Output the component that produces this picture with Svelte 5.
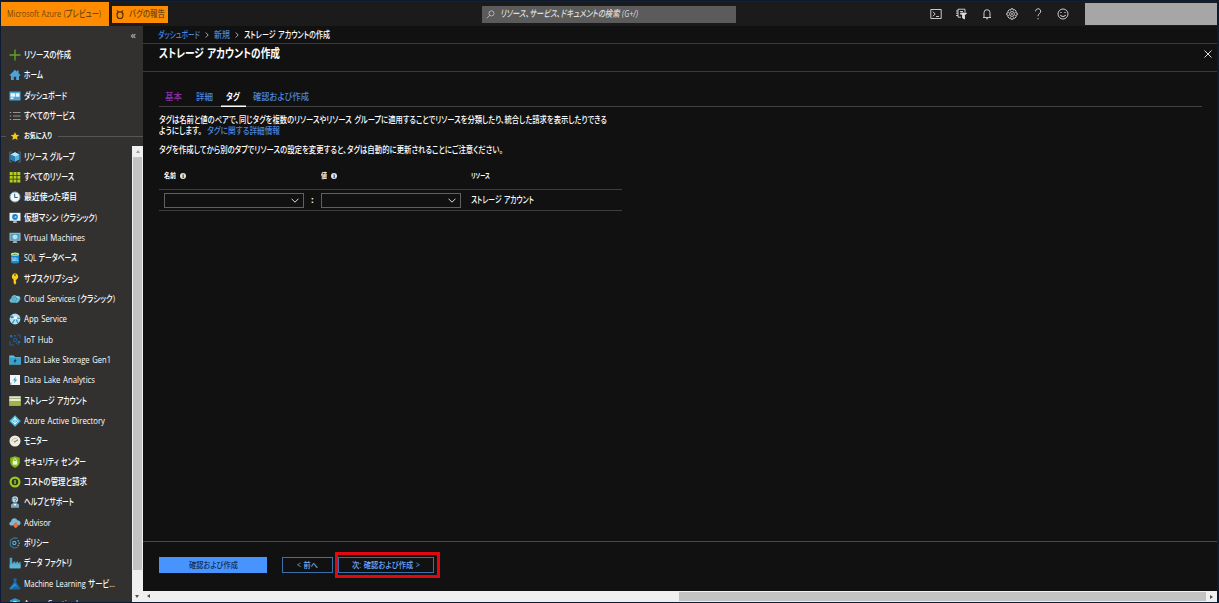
<script lang="ts">
	const MENU = [
		{
			label: 'リソースの作成',
			width: 47,
			icon: '<path d="M6 .5v11M.5 6h11" stroke="#5ea226" stroke-width="1.4"/>'
		},
		{
			label: 'ホーム',
			width: 19,
			icon: '<path d="M6 .8L.4 6.3l.8.8.8-.7V11h2.8V7.7h2.4V11H10V6.4l.8.7.8-.8-2-2V1.5H8v1.3z" fill="#4da3d6"/>'
		},
		{
			label: 'ダッシュボード',
			width: 43,
			icon: '<path d="M.5 1.5h11v9H.5z" fill="#4aa5da"/><path d="M1.5 3.3h4.6v3.4H1.5zM6.8 3.3h3.7v3.4H6.8zM1.5 7.4h3V9h-3z" fill="#e8f5fb"/>'
		},
		{
			label: 'すべてのサービス',
			width: 51,
			icon: '<path d="M4 2.5h7.5M4 6h7.5M4 9.5h7.5" stroke="#969594"/><path d="M.8 2.5h1.4M.8 6h1.4M.8 9.5h1.4" stroke="#a7a6a5"/>'
		},
		{
			label: 'お気に入り',
			width: 28,
			heading: true,
			icon: '<path d="M6 2l1.2 2.7 3 .3L8 7l.6 3L6 8.5 3.4 10 4 7 1.8 5l3-.3z" fill="#f4ca18"/>'
		},
		{
			label: 'リソース グループ',
			width: 51,
			icon: '<path d="M2.8 1H.8v10h2M9.2 1h2v10h-2" fill="none" stroke="#4f6f82"/><path d="M6 1.2l4.4 2.2v5L6 10.8 1.6 8.4v-5z" fill="#58b5df"/><path d="M1.6 3.4L6 5.6l4.400-2.200L6 1.200z" fill="#b8e6f7"/><path d="M6 5.6v5.2L1.6 8.4v-5z" fill="#287fb8"/>'
		},
		{
			label: 'すべてのリソース',
			width: 50,
			icon: '<path d="M.7 1h3v3h-3zM4.5 1h3v3h-3zM8.3 1h3v3h-3zM.7 4.7h3v3h-3zM4.5 4.7h3v3h-3zM8.3 4.7h3v3h-3zM.7 8.4h3v3h-3zM4.5 8.4h3v3h-3zM8.3 8.4h3v3h-3z" fill="#b4cf19"/>'
		},
		{
			label: '最近使った項目',
			width: 53,
			icon: '<circle cx="6" cy="6" r="5" fill="#f5f8fa" stroke="#83acc6"/><path d="M5.7 2.7v3.8h3" fill="none" stroke="#3b5365"/>'
		},
		{
			label: '仮想マシン (クラシック)',
			width: 73,
			icon: '<path d="M.5.8h11v8H.5z" fill="#eaf5fc"/><path d="M4.5 9h3l.6 2H3.9z" fill="#9fb6c4"/><circle cx="6" cy="4.9" r="2.8" fill="#1482cd"/><path d="M4.3 5.4h3.5L7 4z" fill="#d6effb"/>'
		},
		{
			label: 'Virtual Machines',
			width: 61,
			icon: '<path d="M.5.8h11v8H.5z" fill="#9dbccb"/><path d="M1.5 1.8h9v6h-9z" fill="#4b9dc5"/><path d="M6 2.4L8.4 3.6v2.7L6 7.5 3.6 6.3V3.6z" fill="#b7e1ef"/><path d="M4.5 9h3l1 2h-5z" fill="#8bb0be"/>'
		},
		{
			label: 'SQL データベース',
			width: 53,
			icon: '<path d="M2 2.5h8v7.7c0 1.8-8 1.8-8 0z" fill="#1689d0"/><ellipse cx="6" cy="2.3" rx="4" ry="1.7" fill="#d7eff3"/><ellipse cx="6" cy="2.4" rx="2.9" ry="1" fill="#78b743"/><path d="M4.5 5.8H3v1.4h1.4v1.4H2.8M5.2 5.8h1.6v2.8H5.2zM8 5.6v3h1.4" fill="none" stroke="#d7f1ff" stroke-width=".6"/>'
		},
		{
			label: 'サブスクリプション',
			width: 55,
			icon: '<path d="M6 .3a3.4 3.4 0 0 0-1.4 6.4V10L6 11.7 7.4 10l-.8-.8.8-.8-.8-.8.8-.9A3.4 3.4 0 0 0 6 .3z" fill="#f8cf13"/><circle cx="6" cy="2" r=".9" fill="#635b26"/>'
		},
		{
			label: 'Cloud Services (クラシック)',
			width: 91,
			icon: '<path d="M3 9.8C-.2 9.8-.1 5.8 2.2 5.6 2.2 2 6 .8 7.7 3c3.4-.8 4.7 2.2 3 4.3-.7 2-3 3-4.2 2.5z" fill="#66b9d4"/><circle cx="5.6" cy="6" r="2" fill="none" stroke="#3d8cae" stroke-width=".8" stroke-dasharray="1 .5"/><path d="M7.5 3.5l2.4 1.4" stroke="#c3e6ee"/>'
		},
		{
			label: 'App Service',
			width: 43,
			icon: '<circle cx="6" cy="6" r="5.4" fill="#b6deed"/><path d="M1.5 3.2l5 1.8 4.7.3M6.5 5L3.2 10.6M6.5 5l2.4 5" stroke="#3095bf" stroke-width="1.2"/><circle cx="6.4" cy="5" r="1.8" fill="#edfaff"/><circle cx="2.6" cy="4" r="1.3" fill="#288abb"/>'
		},
		{
			label: 'IoT Hub',
			width: 29,
			icon: '<g fill="none" stroke="#215b8b" stroke-width="1.2"><path d="M1 7v4h4M1 3h3M8 1h3v3M7 9l3 1.5"/><circle cx="6.2" cy="6" r="1.7"/></g><path d="M9 7h2v2H9zM1 1h2v2H1zM5 1h1.5v1.5H5z" fill="#2a6da6"/>'
		},
		{
			label: 'Data Lake Storage Gen1',
			width: 87,
			icon: '<path d="M.3 1.5h4.5L6 3h5.7v7.5H.3z" fill="#67c3e6"/><path d="M.3 3.5h11.4v7H.3z" fill="#3da0cc"/><path d="M6.7 4L4.4 7.4h1.4l-.5 2.3 2.4-3.4H6.3z" fill="#123e62"/>'
		},
		{
			label: 'Data Lake Analytics',
			width: 71,
			icon: '<path d="M1 1h10v10H1z" fill="#f2f4f6"/><path d="M6.7 2.5L4 6.5h1.7l-.6 3 3-4H6.3z" fill="#3d9dbf"/><path d="M1 8.5h1.5V11H1z" fill="#98a6b2"/>'
		},
		{
			label: 'ストレージ アカウント',
			width: 63,
			icon: '<path d="M.3 1.3h11.4v9.5H.3z" fill="#8b9b55"/><path d="M.3 1.3h11.4v2H.3z" fill="#dae0df"/><path d="M.3 3.9h11.4v2.3H.3z" fill="#e8edc5"/><path d="M.3 6.2h11.4v4.6H.3z" fill="#9fb548"/>'
		},
		{
			label: 'Azure Active Directory',
			width: 81,
			icon: '<path d="M6 .2L11.8 6 6 11.8.2 6z" fill="#4fbee3"/><path d="M6 2.2v7.2M6 3L3.2 6.4 6 8.8l2.8-2.4z" fill="none" stroke="#e7faff" stroke-width=".9"/>'
		},
		{
			label: 'モニター',
			width: 24,
			icon: '<circle cx="6" cy="6" r="5.5" fill="#efeee6"/><path d="M2.8 6.6a3.3 3.3 0 0 1 6.200-1.600" fill="none" stroke="#b3b09a" stroke-width=".8"/><path d="M5.700 6.700L9 5" stroke="#7b703b"/><circle cx="5.7" cy="6.8" r="1" fill="#b3a151"/>'
		},
		{
			label: 'セキュリティ センター',
			width: 62,
			icon: '<path d="M6 .2l4.8 1.6V6c0 3-2.8 5-4.8 5.8C4 11 1.2 9 1.2 6V1.8z" fill="#7fba12"/><path d="M3.8 5h4.4v3.7H3.8z" fill="#f2f7df"/><path d="M4.7 5V3.9a1.3 1.3 0 0 1 2.6 0V5" fill="none" stroke="#f2f7df" stroke-width=".8"/>'
		},
		{
			label: 'コストの管理と請求',
			width: 63,
			icon: '<circle cx="6" cy="6" r="4.4" fill="#303817" stroke="#9aca20" stroke-width="2.2"/><path d="M6 4v4" stroke="#d7e39c"/>'
		},
		{
			label: 'ヘルプとサポート',
			width: 50,
			icon: '<circle cx="6" cy="3.4" r="3.1" fill="#c4dae5"/><path d="M2 11.8V8.5Q6 5 10 8.5v3.3z" fill="#71aac7"/><path d="M4.8 3a1.3 1.3 0 1 1 1.5 1.5v1M3 2v3.5" fill="none" stroke="#417994"/><path d="M4.5 8l1.5 2 1.5-2z" fill="#eff8fa"/>'
		},
		{
			label: 'Advisor',
			width: 27,
			icon: '<path d="M2.5 8.5C-.4 8.5-.2 5 2 4.7 2.4.4 7.4.3 8.3 3.2c4-.1 4.3 5.2.8 5.3z" fill="#7eb6d5"/><path d="M6.800 5l2.600 2.500-1.300.1.7 2-2.100 1.700-2-1.700.6-2H4.200z" fill="#ed6b33"/>'
		},
		{
			label: 'ポリシー',
			width: 25,
			icon: '<path d="M8.6 1.4L5 .9 1.3 3.2v5.4L5 11l3.8-.7" fill="none" stroke="#347b9e" stroke-width="1.1"/><circle cx="5.3" cy="6" r="1.600" fill="none" stroke="#5ba8c9" stroke-width="1.2"/><path d="M8.5 3h1.6v1.5H8.5zM9.5 5.4H11V7H9.5zM8.5 7.8h1.6v1.5H8.5z" fill="#47a1cc"/>'
		},
		{
			label: 'データ ファクトリ',
			width: 48,
			icon: '<path d="M.7.8h2.5v5.5L6.2 4v2.3L9 4.1v2.2l2.5-1.8v6.8H.7z" fill="#4ba5cb"/><path d="M.7 7.4h10.8v3.900H.7z" fill="#5fb5d6"/>'
		},
		{
			label: 'Machine Learning サービ...',
			width: 91,
			icon: '<path d="M4.2.5h3.6L7.2 4l4.3 6.6-1 1h-9l-1-1L4.9 4z" fill="#1768a7"/><path d="M6 5l2.4 4L6 8l-4.500 3.600-1-1z" fill="#2f8fce"/>'
		},
		{
			label: 'Azure Sentinel',
			width: 54,
			icon: '<path d="M6 .3l5 2v4C11 9 8.5 11 6 12 3.5 11 1 9 1 6.3v-4z" fill="#299bd1"/><circle cx="6" cy="5.5" r="2.5" fill="#c8edfc"/><circle cx="6" cy="5.5" r="1" fill="#176ba6"/>'
		}
	];

	const TOOLS = [
		'<path d="M.8 1.5h10.4v9H.8zM2.8 3.7L5.2 6 2.8 8.3M6 8.5h3"/>',
		'<path d="M10 4V1.2H3v8h3M1 3h2M1 5.2h2M1 7.5h2M5 3.5h3M5 6h1"/><path d="M5.5 5h6L9.5 7.3V11l-2-1.2V7.3z" fill="#ddd"/>',
		'<path d="M2 9.5h8M3 9.5V4.7a3 3 0 0 1 6 0v4.8M5 10.8h2"/>',
		'<path d="M5 .8h2l.4 1.4 1.3-.5 1.5 1.5-.6 1.3 1.6.5v2l-1.6.4.6 1.4-1.5 1.5-1.3-.6-.4 1.5H5l-.4-1.5-1.3.6-1.500-1.500.6-1.400L.8 7V5l1.6-.5-.6-1.3 1.5-1.5 1.3.5z"/><circle cx="6" cy="6" r="2.4"/><circle cx="6" cy="6" r=".5"/>',
		'<path d="M3.5 3.3a2.6 2.6 0 1 1 4.3 2Q6 6.4 6 8.2M6 10v1.3"/>',
		'<circle cx="6" cy="6" r="5"/><path d="M3.3 7q2.7 3 5.4 0M4 4v1M8 4v1" stroke-width="1.1"/>'
	];

	// Condenses a label horizontally to the given width
	function fit(node: HTMLElement, width: number) {
		const natural = node.getBoundingClientRect().width;
		node.style.transform = `scaleX(${width / natural})`;
		node.style.marginRight = `${width - natural}px`;
	}
</script>

<div class="portal">
	<header class="topbar">
		<div class="brand"><span class="label" use:fit={94}>Microsoft Azure (プレビュー)</span></div>
		<div class="bug">
			<svg viewBox="0 0 12 12" width="10" height="11">
				<path d="M6 2.800a3.500 4 0 0 1 0 8 3.500 4 0 0 1 0-8zM3.500 2.800L2.500.800M8.500 2.800l1-2M3.500 2.800h5M1.500 5l1 .5M10.500 5l-1 .5" />
			</svg>
			<span class="label" use:fit={36}>バグの報告</span>
		</div>
		<div class="search">
			<svg viewBox="0 0 12 12" width="9" height="9"><circle cx="7.3" cy="4.5" r="3.4" /><path d="M5 7L1 11" /></svg>
			<span class="label" use:fit={138}>リソース、サービス、ドキュメントの検索 (G+/)</span>
		</div>
		<div class="tools">
			{#each TOOLS as tool}
				<svg viewBox="0 0 12 12" width="12" height="12">{@html tool}</svg>
			{/each}
		</div>
		<div class="account"></div>
	</header>

	<div class="body">
		<nav class="sidebar">
			<div class="sidebar__collapse">«</div>
			<ul class="menu">
				{#each MENU as item}
					<li class="menu__item" class:menu__item--heading={item.heading}>
						{#if item.heading}<i class="rule rule--start"></i>{/if}
						<svg viewBox="0 0 12 12" width="12" height="12">{@html item.icon}</svg>
						<span class="label" use:fit={item.width}>{item.label}</span>
						{#if item.heading}<i class="rule"></i>{/if}
					</li>
				{/each}
			</ul>
			<div class="vscroll">
				<i class="arrow arrow--up"></i>
				<div class="vscroll__thumb"></div>
				<i class="arrow arrow--down"></i>
			</div>
		</nav>

		<main class="main">
			<div class="crumbs">
				<a href="#dashboard"><span class="label" use:fit={42}>ダッシュボード</span></a>
				<svg viewBox="0 0 4 6" width="4" height="6"><path d="M.7.5L3.2 3 .7 5.5" /></svg>
				<a href="#new"><span class="label" use:fit={16}>新規</span></a>
				<svg viewBox="0 0 4 6" width="4" height="6"><path d="M.7.5L3.2 3 .7 5.5" /></svg>
				<span class="label" use:fit={86}>ストレージ アカウントの作成</span>
			</div>
			<div class="title">
				<h1><span class="label" use:fit={121}>ストレージ アカウントの作成</span></h1>
				<svg viewBox="0 0 8 8" width="8" height="8"><path d="M.5.5l7 7M7.5.5l-7 7" /></svg>
			</div>

			<section class="content">
				<div class="tabs">
					<div class="tab tab--visited"><span class="label" use:fit={17}>基本</span></div>
					<div class="tab"><span class="label" use:fit={17}>詳細</span></div>
					<div class="tab tab--active"><span class="label" use:fit={14}>タグ</span></div>
					<div class="tab"><span class="label" use:fit={56}>確認および作成</span></div>
				</div>
				<div class="text">
					<div><span class="label" use:fit={448}>タグは名前と値のペアで、同じタグを複数のリソースやリソース グループに適用することでリソースを分類したり、統合した請求を表示したりできる</span></div>
					<div>
						<span class="label" use:fit={43}>ようにします。</span>
						<a href="#tags"><span class="label" use:fit={73}>タグに関する詳細情報</span></a>
					</div>
				</div>
				<div class="text text--note">
					<span class="label" use:fit={344}>タグを作成してから別のタブでリソースの設定を変更すると、タグは自動的に更新されることにご注意ください。</span>
				</div>
				<div class="grid grid--head">
					<div><span class="label" use:fit={12}>名前</span><i class="info">i</i></div>
					<div><span class="label" use:fit={6}>値</span><i class="info">i</i></div>
					<div><span class="label" use:fit={19}>リソース</span></div>
				</div>
				<div class="grid grid--row">
					<div>
						<div class="select"><svg viewBox="0 0 8 5" width="8" height="5"><path d="M.5.7L4 4.2 7.5.7" /></svg></div>
						<b>:</b>
					</div>
					<div>
						<div class="select"><svg viewBox="0 0 8 5" width="8" height="5"><path d="M.5.7L4 4.2 7.5.7" /></svg></div>
					</div>
					<div><span class="label" use:fit={63}>ストレージ アカウント</span></div>
				</div>
			</section>

			<footer class="footer">
				<div class="btn btn--primary"><span class="label" use:fit={49}>確認および作成</span></div>
				<div class="btn btn--prev"><span class="label" use:fit={21}>&lt; 前へ</span></div>
				<div class="callout">
					<div class="btn btn--next"><span class="label" use:fit={68}>次: 確認および作成 &gt;</span></div>
				</div>
			</footer>
			<div class="hscroll">
				<i class="arrow arrow--left"></i>
				<div class="hscroll__thumb"></div>
				<i class="arrow arrow--right"></i>
			</div>
		</main>
	</div>
</div>

<style>
	:global(body) {
		background: #0b1b33;
		overflow: hidden;
	}

	.portal {
		box-sizing: border-box;
		width: 1219px;
		height: 603px;
		padding: 1px 2px 1px 1px;
		background: #0b1b33;
		color: #fff;
		font-family: 'Open Sans', 'Noto Sans CJK JP', sans-serif;
		font-size: 9.5px;
		font-weight: 500;
		line-height: 12px;
		overflow: hidden;
	}

	.portal * {
		box-sizing: border-box;
	}

	svg {
		flex-shrink: 0;
		fill: none;
		stroke-linejoin: round;
	}

	a {
		display: flex;
		color: #4a85dc;
		text-decoration: none;
	}

	.label {
		display: inline-block;
		flex-shrink: 0;
		white-space: nowrap;
		word-spacing: 0.8px;
		transform-origin: left;
		font-feature-settings: 'palt';
	}

	.topbar {
		display: flex;
		align-items: center;
		height: 25px;
		background: #1b1b1b;
		border-top: 1px solid #14202f;
	}

	.brand {
		display: flex;
		align-items: center;
		width: 108px;
		height: 25px;
		padding-left: 6px;
		background: #ff8c00;
		color: #6e4610;
	}

	.bug {
		display: flex;
		align-items: center;
		gap: 4px;
		width: 56px;
		height: 17px;
		margin-left: 3px;
		padding-left: 3px;
		background: #ff8c00;
		color: #6e4610;
	}

	.bug svg {
		stroke: #52330a;
		stroke-width: 1.4;
	}

	.search {
		display: flex;
		align-items: center;
		gap: 5px;
		width: 254px;
		height: 17px;
		margin-left: 314px;
		padding-left: 4px;
		background: #5b5b5b;
		color: #dedede;
		font-style: italic;
	}

	.search svg {
		stroke: #ccc;
	}

	.tools {
		display: flex;
		gap: 13.4px;
		margin-left: 194px;
	}

	.tools svg {
		stroke: #ddd;
		stroke-width: 0.9;
	}

	.account {
		width: 132px;
		height: 22px;
		margin-left: auto;
		background: #a6a6a6;
	}

	.body {
		display: flex;
		height: 576px;
	}

	.sidebar {
		display: grid;
		grid-template: 19px 1fr / 131px 11px;
		width: 142px;
		background: #323130;
		overflow: hidden;
	}

	.sidebar__collapse {
		grid-column: 1 / 3;
		padding: 2px 7px 0 0;
		text-align: right;
		font-size: 11px;
		line-height: 14px;
		color: #c8c8c8;
	}

	.menu {
		height: 557px;
		margin: 0;
		padding: 0;
		list-style: none;
	}

	.menu__item {
		display: flex;
		align-items: center;
		gap: 3px;
		height: 20.33px;
		padding-left: 8px;
	}

	.menu__item--heading {
		width: 142px;
		padding-left: 0;
		font-size: 7px;
		font-weight: 700;
	}

	.rule {
		flex: 1;
		height: 1px;
		margin-left: 3px;
		background: #565554;
	}

	.rule--start {
		flex: 0 0 5px;
		margin-left: 0;
	}

	.vscroll {
		display: flex;
		flex-direction: column;
		align-items: center;
		height: 456px;
		margin-top: 101px;
		background: #f0f0f0;
	}

	.vscroll__thumb {
		flex-shrink: 0;
		width: 9px;
		height: 413px;
		margin-bottom: 21px;
		background: #c3c3c3;
	}

	.arrow {
		width: 11px;
		height: 11px;
		display: grid;
		place-items: center;
		flex-shrink: 0;
	}

	.arrow::before {
		content: '';
		border: 2.5px solid transparent;
		border-top: 0;
		border-bottom: 3px solid #505050;
	}

	.arrow--up::before {
		border-bottom-color: #a0a0a0;
	}

	.arrow--down {
		transform: rotate(180deg);
	}

	.arrow--left {
		transform: rotate(-90deg);
	}

	.arrow--right {
		transform: rotate(90deg);
	}

	.main {
		display: flex;
		flex-direction: column;
		width: 1074px;
		background: #111;
	}

	.crumbs {
		display: flex;
		align-items: center;
		gap: 5px;
		height: 18px;
		padding-left: 15px;
		border-bottom: 1px solid #3a3a3a;
	}

	.crumbs svg {
		stroke: #aaa;
	}

	.title {
		display: flex;
		align-items: center;
		justify-content: space-between;
		height: 28px;
		padding: 0 5px 8px 16px;
		border-bottom: 1px solid #3a3a3a;
	}

	.title svg {
		stroke: #ddd;
	}

	h1 {
		display: flex;
		margin: 0;
		font-size: 12px;
		line-height: 16px;
		font-weight: 700;
	}

	.content {
		flex: 1;
		padding: 16px 15px 0 16px;
	}

	.tabs {
		display: flex;
		height: 19px;
		border-bottom: 1px solid #424242;
		color: #4a85dc;
	}

	.tab {
		display: flex;
		align-items: center;
		height: 18px;
		padding: 0 7px 0 6px;
		margin-right: 1px;
	}

	.tab--visited {
		color: #8a2da5;
	}

	.tab--active {
		height: 19px;
		padding: 0 6px 1px 5px;
		color: #fff;
		font-weight: 700;
		box-shadow: inset 0 -1.5px #fff;
	}

	.text {
		margin-top: 7px;
		line-height: 11px;
	}

	.text > div {
		display: flex;
		gap: 5px;
		height: 11px;
	}

	.text--note {
		height: 12px;
		margin-top: 8px;
	}

	.grid {
		display: grid;
		grid-template-columns: 157px 150px 1fr;
		width: 463px;
		padding-left: 5px;
		border-bottom: 1px solid #3e3e3e;
	}

	.grid > div {
		display: flex;
		align-items: center;
	}

	.grid--head {
		height: 34px;
		padding-top: 6px;
		font-size: 7px;
		font-weight: 700;
	}

	.info {
		width: 6px;
		height: 6px;
		margin-left: 4px;
		border-radius: 50%;
		background: #e4e4e4;
		color: #111;
		font: 700 6px/6px 'Liberation Serif', serif;
		text-align: center;
	}

	.grid--row {
		height: 21px;
	}

	.grid--row b {
		margin-left: 7px;
	}

	.select {
		display: flex;
		align-items: center;
		justify-content: flex-end;
		width: 140px;
		height: 15px;
		padding-right: 4px;
		border: 1px solid #606060;
	}

	.select svg {
		stroke: #ddd;
	}

	.footer {
		display: flex;
		align-items: center;
		height: 50px;
		padding: 0 0 4px 16px;
		border-top: 1px solid #484848;
	}

	.btn {
		display: flex;
		align-items: center;
		justify-content: center;
		height: 16px;
		border: 1px solid #3b6fae;
		font-size: 8.5px;
		color: #6ba9ff;
	}

	.btn--primary {
		width: 108px;
		background: #4894fe;
		border-color: #4894fe;
		color: #152f55;
	}

	.btn--prev {
		width: 51px;
		margin-left: 15px;
	}

	.btn--next {
		width: 96px;
	}

	.callout {
		display: flex;
		align-items: center;
		width: 105px;
		height: 26px;
		margin-left: 2px;
		border: 3px solid #e1080f;
	}

	.hscroll {
		display: flex;
		align-items: center;
		height: 11px;
		background: #f0f0f0;
	}

	.hscroll__thumb {
		width: 527px;
		height: 9px;
		margin-left: auto;
		background: #c3c3c3;
	}
</style>
